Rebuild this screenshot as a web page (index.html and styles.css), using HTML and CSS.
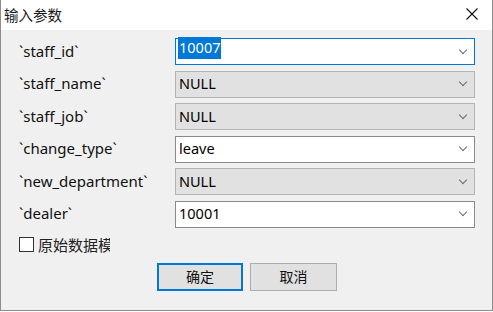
FILE: index.html
```html
<!DOCTYPE html>
<html lang="zh-CN">
  <head>
    <meta charset="UTF-8" />
    <title>输入参数</title>
    <link rel="stylesheet" href="styles.css">
  </head>
  <body>
    <div class="dialog">
      <div class="titlebar">
        <span class="title">输入参数</span>
        <svg class="close" width="12" height="12" viewBox="0 0 12 12">
          <path d="M0.5 0.5 L11.5 11.5 M11.5 0.5 L0.5 11.5" stroke="#111" stroke-width="1.1" fill="none" />
        </svg>
      </div>

      <div class="content">
        <div class="params">
          <label>`staff_id`</label>
          <div class="combo focused"><span class="sel">10007</span><i class="arrow"></i></div>

          <label>`staff_name`</label>
          <div class="combo null"><span>NULL</span><i class="arrow"></i></div>

          <label>`staff_job`</label>
          <div class="combo null"><span>NULL</span><i class="arrow"></i></div>

          <label>`change_type`</label>
          <div class="combo"><span>leave</span><i class="arrow"></i></div>

          <label>`new_department`</label>
          <div class="combo null"><span>NULL</span><i class="arrow"></i></div>

          <label>`dealer`</label>
          <div class="combo"><span>10001</span><i class="arrow"></i></div>
        </div>

        <div class="raw">
          <span class="box"></span>
          <span class="raw-text">原始数据模</span>
        </div>

        <div class="buttons">
          <button class="btn primary">确定</button>
          <button class="btn">取消</button>
        </div>
      </div>
    </div>
  </body>
</html>
```

FILE: styles.css
```css
body {
  margin: 0;
  background: #ffffff;
  font-family: "Noto Sans", "Noto Sans CJK SC", sans-serif;
  font-size: 14px;
  color: #000;
}
.dialog {
  width: 493px;
  height: 311px;
  box-sizing: border-box;
  border: 1px solid #8c8c8c;
  border-top: none;
  display: flex;
  flex-direction: column;
}
.titlebar {
  height: 30px;
  flex: none;
  background: #fff;
  display: flex;
  align-items: center;
  justify-content: space-between;
  padding: 0 14px 0 3px;
}
.title {
  font-family: "Noto Sans CJK SC", sans-serif;
  font-size: 14.5px;
  color: #1a1a1a;
  margin-top: -2px;
}
.close {
  margin-top: -3px;
}
.content {
  flex: 1;
  background: #f0f0f0;
  padding: 8px 17px 0 18px;
}
.params {
  display: grid;
  grid-template-columns: 156px 300px;
  grid-auto-rows: 27px;
  row-gap: 5.6px;
}
.params label {
  display: flex;
  align-items: center;
  padding-bottom: 2px;
  font-size: 15px;
  color: #111;
}
.combo {
  box-sizing: border-box;
  border: 1px solid #8a8a8a;
  background: #fff;
  display: flex;
  align-items: center;
  justify-content: space-between;
  padding: 0 8px 0 3px;
  font-size: 14.5px;
}
.combo.focused {
  border-color: #0078d7;
}
.combo.null {
  background: #e1e1e1;
  border-color: #b4b4b4;
}
.combo span {
  padding-bottom: 2px;
}
.combo .sel {
  background: #0078d7;
  color: #fff;
  padding: 0 1px 2px 1px;
  margin-left: -1px;
  margin-top: -8px;
}
.arrow {
  width: 5px;
  height: 5px;
  border-right: 1px solid #6d6d6d;
  border-bottom: 1px solid #6d6d6d;
  transform: rotate(45deg);
  margin-top: -4px;
}
.raw {
  display: flex;
  align-items: center;
  gap: 4px;
  margin-top: 9px;
  height: 15px;
}
.box {
  width: 15px;
  height: 15px;
  box-sizing: border-box;
  border: 1px solid #333;
  background: #fff;
}
.raw-text {
  font-family: "Noto Sans CJK SC", sans-serif;
  font-size: 15px;
  color: #222;
  width: 72px;
  overflow: hidden;
  white-space: nowrap;
}
.buttons {
  display: flex;
  gap: 7px;
  margin-top: 11px;
  padding-left: 138px;
}
.btn {
  width: 87px;
  height: 28px;
  box-sizing: border-box;
  border: 1px solid #adadad;
  background: #e1e1e1;
  font-family: "Noto Sans CJK SC", sans-serif;
  font-size: 14px;
  color: #111;
  padding: 0 0 2px;
}
.btn.primary {
  width: 86px;
  border: 2px solid #0078d7;
}
```
